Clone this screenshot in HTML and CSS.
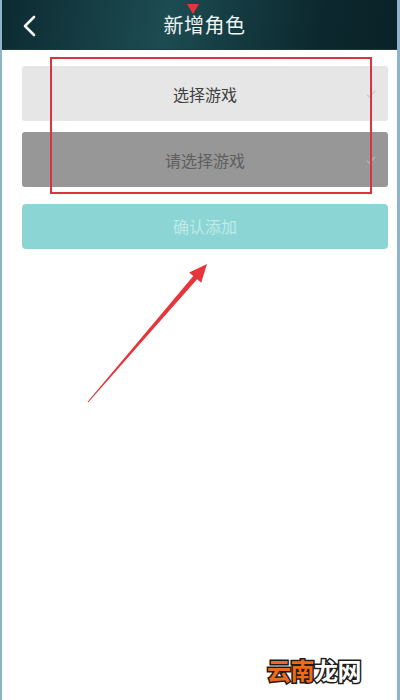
FILE: index.html
```html
<!DOCTYPE html>
<html lang="zh-CN">
<head>
<meta charset="utf-8">
<title>新增角色</title>
<link rel="stylesheet" href="styles.css">
</head>
<body>
<div class="frame">
  <header class="topbar">
    <span class="back">
      <svg width="16" height="22" viewBox="0 0 16 22"><polyline points="12,2 3,11 12,20" fill="none" stroke="#f2f6f6" stroke-width="2.6" stroke-linecap="round" stroke-linejoin="round"/></svg>
    </span>
    <h1 class="title">新增角色</h1>
    <span class="spacer"></span>
  </header>

  <main class="content">
    <div class="select select-light">
      <span></span>
      <span class="select-text">选择游戏</span>
      <svg class="tick" width="10" height="8" viewBox="0 0 10 8"><polyline points="1,5 3.5,7 9,1" fill="none" stroke="#c9c9c9" stroke-width="1.3"/></svg>
    </div>
    <div class="select select-dark">
      <span></span>
      <span class="select-text">请选择游戏</span>
      <svg class="tick" width="10" height="8" viewBox="0 0 10 8"><polyline points="1,5 3.5,7 9,1" fill="none" stroke="#b4b4b4" stroke-width="1.3"/></svg>
    </div>
    <button class="confirm">确认添加</button>
  </main>

  <span class="marker"></span>
  <span class="highlight"></span>
  <svg class="arrow" width="400" height="700" viewBox="0 0 400 700">
    <polygon points="87.6,401.7 193.3,276 189.2,272.4 207,264 201.2,282.8 197.1,279.2 88.4,402.3" fill="#e6363c"/>
  </svg>
  <div class="watermark"><span class="wm-orange">云南</span><span class="wm-white">龙网</span></div>
</div>
</body>
</html>
```

FILE: styles.css
```css
* { box-sizing: border-box; }
html, body { margin: 0; padding: 0; }
body {
  font-family: "Noto Sans CJK SC", "Noto Sans", sans-serif;
  background: #ffffff;
}
.frame {
  position: relative;
  width: 400px;
  height: 700px;
  border-left: 2px solid #8db4cc;
  border-right: 3px solid #8db4cc;
  background: #ffffff;
  overflow: hidden;
}
.topbar {
  height: 50px;
  display: flex;
  align-items: center;
  padding: 0 14px 0 20px;
  background: linear-gradient(100deg, #0b2a30 0%, #163f45 25%, #1d4c52 42%, #133a40 60%, #0c282e 80%, #0a2227 100%);
  border-bottom: 1px solid #1c3a40;
}
.back {
  width: 26px;
  display: flex;
  align-items: center;
  margin-top: 3px;
}
.title {
  flex: 1;
  margin: 0;
  text-align: center;
  font-size: 20px;
  font-weight: 400;
  color: #eef4f4;
  letter-spacing: 0.5px;
  padding-left: 4px;
}
.spacer { width: 26px; }
.content {
  display: flex;
  flex-direction: column;
  padding: 16px 9px 0 20px;
}
.select {
  height: 55px;
  display: grid;
  grid-template-columns: 1fr auto 1fr;
  align-items: center;
  border-radius: 3px;
  padding-right: 12px;
  padding-left: 12px;
}
.select + .select { margin-top: 11px; }
.select-light { background: #e6e6e6; }
.select-dark { background: #979797; }
.select-text {
  font-size: 16px;
  font-weight: 400;
}
.select-light .select-text { color: #3e3e3e; }
.select-dark .select-text { color: #5e5e5e; }
.tick { justify-self: end; }
.confirm {
  margin-top: 17px;
  height: 45px;
  border: none;
  border-radius: 4px;
  background: #8bd6d4;
  color: #bfeae9;
  font-family: "Noto Sans CJK SC", "Noto Sans", sans-serif;
  font-size: 16px;
  font-weight: 400;
  padding: 0 0 2px 0;
}
.marker {
  position: absolute;
  left: 185px;
  top: 4px;
  width: 0;
  height: 0;
  border-left: 6px solid transparent;
  border-right: 6px solid transparent;
  border-top: 10px solid #e2363c;
}
.highlight {
  position: absolute;
  left: 48px;
  top: 57px;
  width: 322px;
  height: 137px;
  border: 2.5px solid #d8353f;
}
.arrow {
  position: absolute;
  left: -2px;
  top: 0;
  pointer-events: none;
}
.watermark {
  position: absolute;
  left: 265px;
  top: 652px;
  font-size: 24px;
  font-weight: 700;
  letter-spacing: -0.5px;
  -webkit-text-stroke: 3px #1d1d1d;
  paint-order: stroke fill;
}
.wm-orange { color: #ec6a1c; }
.wm-white { color: #ffffff; }
```
